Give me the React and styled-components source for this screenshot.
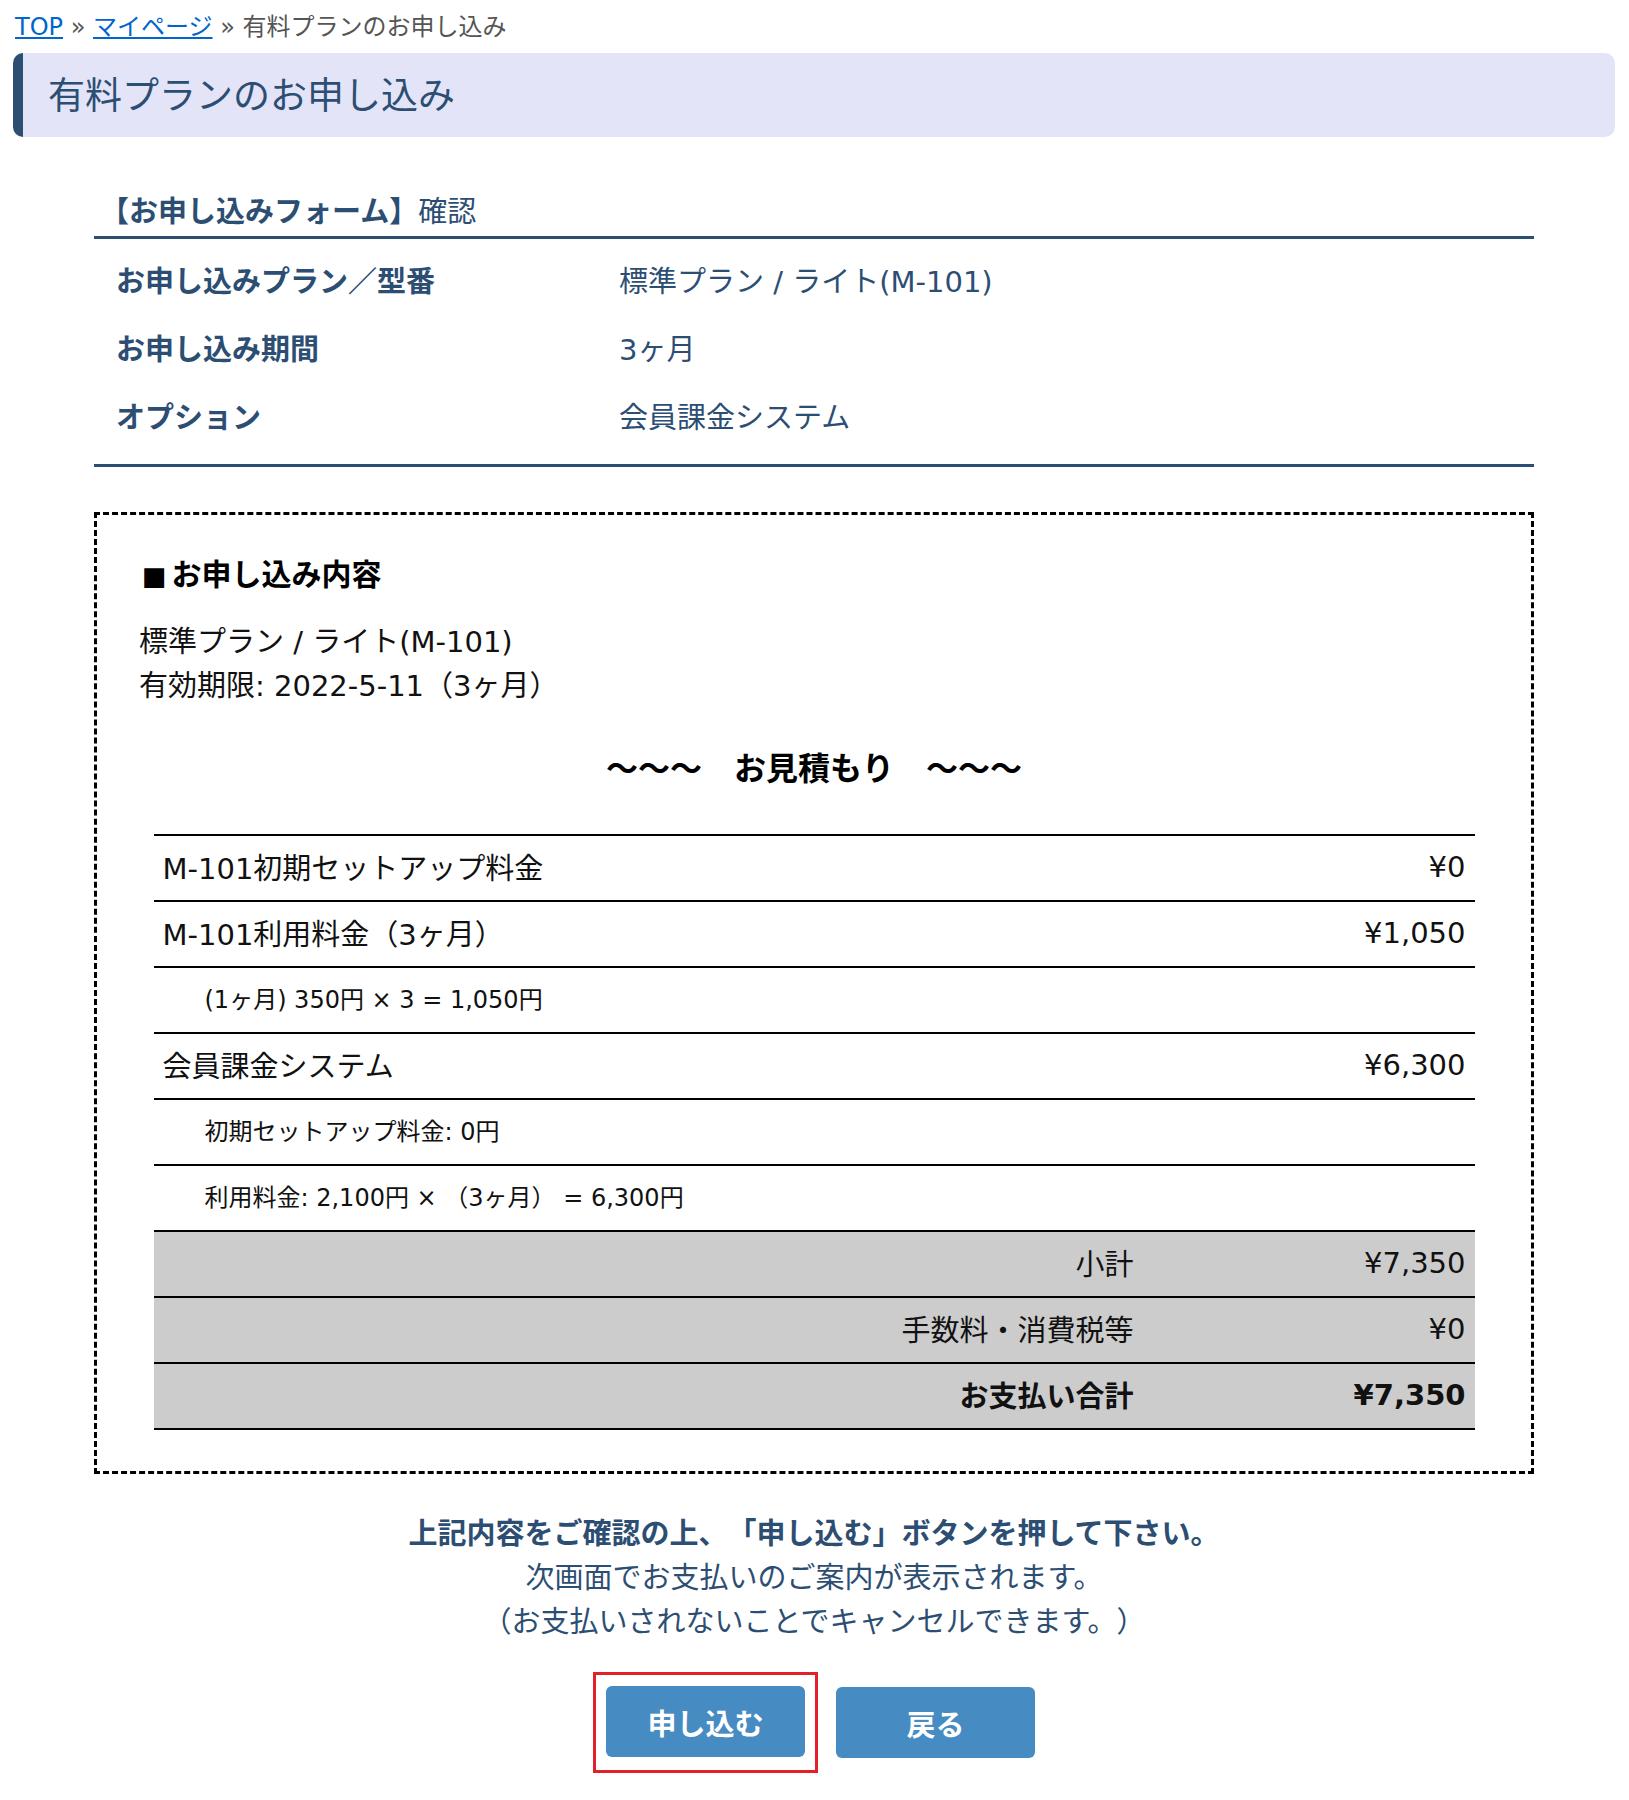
import React from 'react'
import styled, { createGlobalStyle } from 'styled-components'

const GlobalStyle = createGlobalStyle`
  body {
    margin: 0;
    background: #fff;
    font-family: "DejaVu Sans", "Noto Sans CJK JP", sans-serif;
    color: #111;
    text-spacing-trim: space-all;
  }
`

const estimate = [
  { label: 'M-101初期セットアップ料金', amount: '¥0' },
  { label: 'M-101利用料金（3ヶ月）', amount: '¥1,050' },
  { label: '(1ヶ月) 350円 × 3 = 1,050円', sub: true },
  { label: '会員課金システム', amount: '¥6,300' },
  { label: '初期セットアップ料金: 0円', sub: true },
  { label: '利用料金: 2,100円 × （3ヶ月） = 6,300円', sub: true },
]

const totals = [
  { label: '小計', amount: '¥7,350' },
  { label: '手数料・消費税等', amount: '¥0' },
  { label: 'お支払い合計', amount: '¥7,350', strong: true },
]

function App() {
  return (
    <Page>
      <GlobalStyle />
      <Breadcrumb>
        <a href="#">TOP</a> » <a href="#">マイページ</a> » 有料プランのお申し込み
      </Breadcrumb>
      <PageTitle>有料プランのお申し込み</PageTitle>

      <Section>
        <FormTitle>
          <b>【お申し込みフォーム】</b>確認
        </FormTitle>
        <InfoList>
          <InfoRow>
            <dt>お申し込みプラン／型番</dt>
            <dd>標準プラン / ライト(M-101)</dd>
          </InfoRow>
          <InfoRow>
            <dt>お申し込み期間</dt>
            <dd>3ヶ月</dd>
          </InfoRow>
          <InfoRow>
            <dt>オプション</dt>
            <dd>会員課金システム</dd>
          </InfoRow>
        </InfoList>

        <DashedBox>
          <BoxHeading><Square>■</Square>お申し込み内容</BoxHeading>
          <Plain>
            標準プラン / ライト(M-101)<br />
            有効期限: 2022-5-11（3ヶ月）
          </Plain>
          <EstimateTitle>～～～　お見積もり　～～～</EstimateTitle>
          <EstimateTable>
            <colgroup>
              <col />
              <col style={{ width: 340 }} />
            </colgroup>
            <tbody>
              {estimate.map((row, i) => (
                <tr key={i}>
                  <ItemCell sub={row.sub}>{row.label}</ItemCell>
                  <AmountCell>{row.amount}</AmountCell>
                </tr>
              ))}
              {totals.map((row, i) => (
                <TotalRow key={i} strong={row.strong}>
                  <TotalLabel>{row.label}</TotalLabel>
                  <AmountCell>{row.amount}</AmountCell>
                </TotalRow>
              ))}
            </tbody>
          </EstimateTable>
        </DashedBox>

        <Notice>
          <strong>上記内容をご確認の上、「申し込む」ボタンを押して下さい。</strong>
          <span>次画面でお支払いのご案内が表示されます。</span>
          <span>（お支払いされないことでキャンセルできます。）</span>
        </Notice>

        <Buttons>
          <Highlight>
            <Button>申し込む</Button>
          </Highlight>
          <Button>戻る</Button>
        </Buttons>
      </Section>
    </Page>
  )
}

export default App

const Page = styled.div`
  padding: 10px 14px 24px 13px;
`

const Breadcrumb = styled.div`
  font-size: 24px;
  line-height: 34px;
  color: #555;
  padding-left: 2px;

  a {
    color: #0066cc;
    text-decoration: underline;
  }
`

const PageTitle = styled.h1`
  margin: 9px 0 0;
  height: 84px;
  box-sizing: border-box;
  display: flex;
  align-items: center;
  padding: 0 0 5px 25px;
  background: #e4e4f8;
  border-left: 10px solid #2d4e73;
  border-radius: 10px;
  font-size: 37px;
  font-weight: 400;
  color: #2d4e73;
`

const Section = styled.div`
  width: 1440px;
  margin: 0 auto;
  padding-top: 57px;
`

const FormTitle = styled.div`
  padding: 0 0 6px 6px;
  font-size: 29px;
  line-height: 36px;
  color: #2d4e73;
  border-bottom: 3px solid #2d4e73;

  b {
    font-weight: 700;
  }
`

const InfoList = styled.dl`
  margin: 0;
  padding: 6px 0 15px;
  border-bottom: 3px solid #2d4e73;
`

const InfoRow = styled.div`
  display: grid;
  grid-template-columns: 525px 1fr;
  align-items: center;
  height: 68px;
  font-size: 29px;
  color: #2d4e73;

  dt {
    padding-left: 22px;
    font-weight: 700;
  }
  dd {
    margin: 0;
  }
`

const DashedBox = styled.div`
  margin-top: 45px;
  border: 3px dashed #000;
  padding: 40px 42px 41px;
`

const BoxHeading = styled.h3`
  margin: 0;
  padding-left: 3px;
  font-size: 30px;
  line-height: 40px;
  font-weight: 700;
  color: #000;
`

const Square = styled.span`
  margin-right: 5px;
  font-size: 26px;
`

const Plain = styled.p`
  margin: 24px 0 0;
  font-size: 29px;
  line-height: 44px;
  color: #111;
`

const EstimateTitle = styled.div`
  margin-top: 39px;
  text-align: center;
  font-size: 32px;
  line-height: 44px;
  font-weight: 700;
  color: #000;
`

const EstimateTable = styled.table`
  width: 1321px;
  margin: 43px auto 0;
  border-collapse: collapse;
  table-layout: fixed;
  color: #111;

  tr {
    height: 66px;
    border-top: 2px solid #000;
  }
  tr:last-child {
    border-bottom: 2px solid #000;
  }
`

const ItemCell = styled.td`
  padding: 0 0 5px ${p => (p.sub ? '51px' : '9px')};
  font-size: ${p => (p.sub ? '24px' : '29px')};
  white-space: nowrap;
`

const AmountCell = styled.td`
  padding: 0 9px 2px 0;
  text-align: right;
  font-size: 29px;
`

const TotalRow = styled.tr`
  background: #cccccc;
  font-weight: ${p => (p.strong ? 700 : 400)};
`

const TotalLabel = styled.td`
  padding-bottom: 5px;
  text-align: right;
  font-size: 29px;
`

const Notice = styled.div`
  margin-top: 38px;
  display: flex;
  flex-direction: column;
  align-items: center;
  font-size: 29px;
  line-height: 44px;
  color: #2d4e73;

  strong {
    font-weight: 700;
  }
`

const Buttons = styled.div`
  margin-top: 28px;
  display: flex;
  justify-content: center;
  align-items: center;
  gap: 18px;
`

const Highlight = styled.div`
  border: 3px solid #e3202a;
  padding: 11px 10px 13px;
`

const Button = styled.button`
  width: 199px;
  height: 71px;
  border: none;
  border-radius: 6px;
  background: #468cc2;
  color: #fff;
  font-family: inherit;
  font-size: 29px;
  font-weight: 700;
  cursor: pointer;
`
